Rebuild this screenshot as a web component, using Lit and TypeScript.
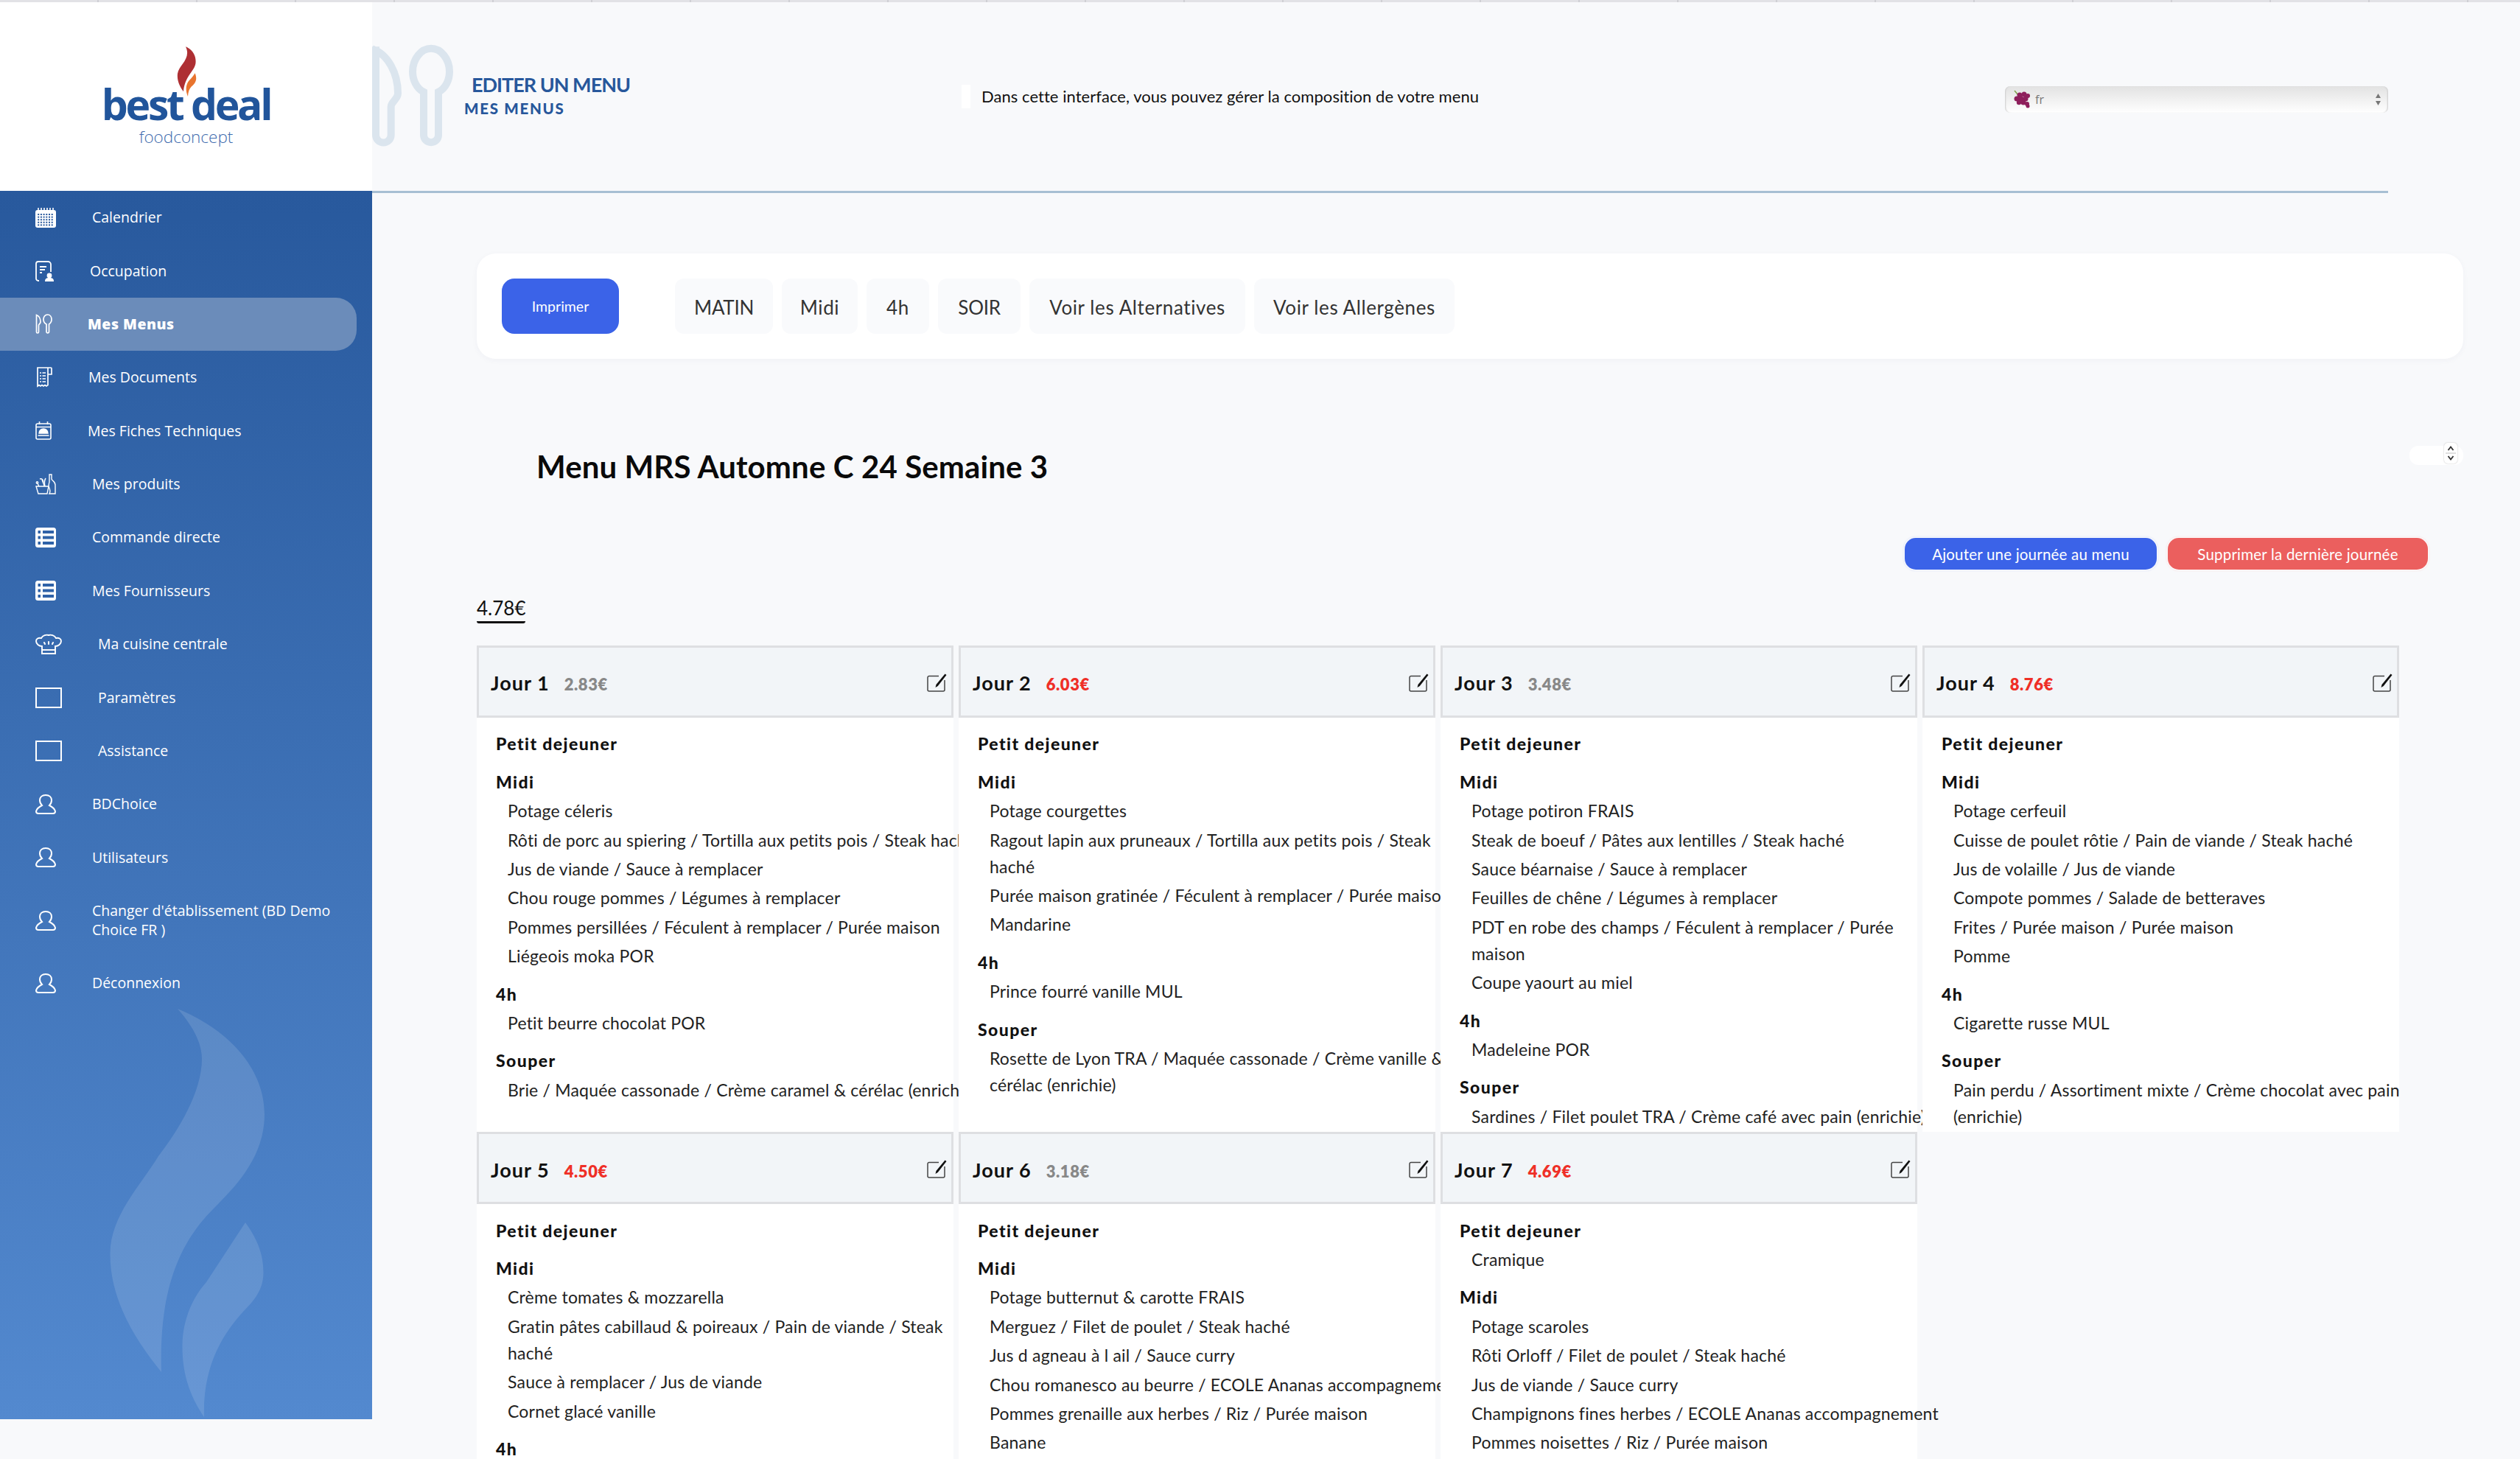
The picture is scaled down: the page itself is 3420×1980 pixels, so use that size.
import { LitElement, html, css, svg } from "lit";
import { customElement } from "lit/decorators.js";

type Section = { name: string; items: string[] };
type Day = { n: number; price: string; high: boolean; sections: Section[] };

const DAYS: Day[] = [
  { n: 1, price: "2.83€", high: false, sections: [
    { name: "Petit dejeuner", items: [] },
    { name: "Midi", items: ["Potage céleris", "Rôti de porc au spiering / Tortilla aux petits pois / Steak haché", "Jus de viande / Sauce à remplacer", "Chou rouge pommes / Légumes à remplacer", "Pommes persillées / Féculent à remplacer / Purée maison", "Liégeois moka POR"] },
    { name: "4h", items: ["Petit beurre chocolat POR"] },
    { name: "Souper", items: ["Brie / Maquée cassonade / Crème caramel & cérélac (enrichie)"] },
  ]},
  { n: 2, price: "6.03€", high: true, sections: [
    { name: "Petit dejeuner", items: [] },
    { name: "Midi", items: ["Potage courgettes", "Ragout lapin aux pruneaux / Tortilla aux petits pois / Steak\nhaché", "Purée maison gratinée / Féculent à remplacer / Purée maison", "Mandarine"] },
    { name: "4h", items: ["Prince fourré vanille MUL"] },
    { name: "Souper", items: ["Rosette de Lyon TRA / Maquée cassonade / Crème vanille &\ncérélac (enrichie)"] },
  ]},
  { n: 3, price: "3.48€", high: false, sections: [
    { name: "Petit dejeuner", items: [] },
    { name: "Midi", items: ["Potage potiron FRAIS", "Steak de boeuf / Pâtes aux lentilles / Steak haché", "Sauce béarnaise / Sauce à remplacer", "Feuilles de chêne / Légumes à remplacer", "PDT en robe des champs / Féculent à remplacer / Purée\nmaison", "Coupe yaourt au miel"] },
    { name: "4h", items: ["Madeleine POR"] },
    { name: "Souper", items: ["Sardines / Filet poulet TRA / Crème café avec pain (enrichie)"] },
  ]},
  { n: 4, price: "8.76€", high: true, sections: [
    { name: "Petit dejeuner", items: [] },
    { name: "Midi", items: ["Potage cerfeuil", "Cuisse de poulet rôtie / Pain de viande / Steak haché", "Jus de volaille / Jus de viande", "Compote pommes / Salade de betteraves", "Frites / Purée maison / Purée maison", "Pomme"] },
    { name: "4h", items: ["Cigarette russe MUL"] },
    { name: "Souper", items: ["Pain perdu / Assortiment mixte / Crème chocolat avec pain\n(enrichie)"] },
  ]},
  { n: 5, price: "4.50€", high: true, sections: [
    { name: "Petit dejeuner", items: [] },
    { name: "Midi", items: ["Crème tomates & mozzarella", "Gratin pâtes cabillaud & poireaux / Pain de viande / Steak\nhaché", "Sauce à remplacer / Jus de viande", "Cornet glacé vanille"] },
    { name: "4h", items: [] },
  ]},
  { n: 6, price: "3.18€", high: false, sections: [
    { name: "Petit dejeuner", items: [] },
    { name: "Midi", items: ["Potage butternut & carotte FRAIS", "Merguez / Filet de poulet / Steak haché", "Jus d agneau à l ail / Sauce curry", "Chou romanesco au beurre / ECOLE Ananas accompagnement", "Pommes grenaille aux herbes / Riz / Purée maison", "Banane"] },
  ]},
  { n: 7, price: "4.69€", high: true, sections: [
    { name: "Petit dejeuner", items: ["Cramique"] },
    { name: "Midi", items: ["Potage scaroles", "Rôti Orloff / Filet de poulet / Steak haché", "Jus de viande / Sauce curry", "Champignons fines herbes / ECOLE Ananas accompagnement", "Pommes noisettes / Riz / Purée maison"] },
  ]},
];

const TABS: [string, number][] = [["MATIN", 133], ["Midi", 103], ["4h", 85], ["SOIR", 112], ["Voir les Alternatives", 293], ["Voir les Allergènes", 272]];

const holes = () => {
  const out = [];
  for (let r = 0; r < 5; r++) for (let c = 0; c < 6; c++)
    out.push(svg`<rect x=${3.2 + c * 3.7} y=${8 + r * 3.6} width="2" height="2" fill="#28599d"/>`);
  return out;
};

const ICONS: Record<string, unknown> = {
  calendar: html`<svg width="28" height="27" viewBox="0 0 28 27"><rect y="3" width="28" height="24" rx="3" fill="#fff"/><path d="M4 0v5M8 0v5M12 0v5M16 0v5M20 0v5M24 0v5" stroke="#fff" stroke-width="1.6"/>${holes()}</svg>`,
  occupation: html`<svg width="25" height="28" viewBox="0 0 25 28" fill="none" stroke="#fff" stroke-width="1.8"><path d="M5 27H4a3 3 0 0 1-3-3V4a3 3 0 0 1 3-3h13a4 4 0 0 1 4 4v10"/><path d="M6 8h9M6 12h7M6 16h3"/><circle cx="19" cy="20" r="3.4" fill="#fff" stroke="none"/><path d="M13 28c0-4 2-5 6-5s6 1 6 5z" fill="#fff" stroke="none"/></svg>`,
  menus: html`<svg width="23" height="27" viewBox="0 0 23 27" fill="none" stroke="#fff" stroke-width="1.7"><path d="M1.5 1.5C5.5 3 7 7 7 11c0 2-2.5 3-2.5 4.5v9a1.5 1.5 0 0 1-3 0z"/><path d="M15 14c-2-1-4-3-4-6.5C11 4 13 1 16.5 1S22 4 22 7.500C22 11 20 13 18.500 14v10.500a1.800 1.800 0 0 1-3.500 0z"/></svg>`,
  docs: html`<svg width="23" height="28" viewBox="0 0 23 28" fill="none" stroke="#fff" stroke-width="1.7"><path d="M17 1H3v25l2-1.500 2 1.500 2-1.500 2 1.500 2-1.500 2 1.500 2-1.500V1zM17 1h4a1 1 0 0 1 1 1v8h-5"/><path d="M6 8h8M6 12h8M6 16h8M6 20h8" stroke-dasharray="2 1.500 6 0"/></svg>`,
  fiches: html`<svg width="22" height="25" viewBox="0 0 22 25" fill="none" stroke="#fff" stroke-width="1.600"><rect x="1" y="3" width="20" height="21" rx="2"/><path d="M1 7.500h20M5.500 0v4M16.500 0v4"/><path d="M5 16c0-4 3-6 6-6s6 2 6 6zM3.500 19h15" fill="#fff" stroke-width="1.400"/></svg>`,
  produits: html`<svg width="28" height="28" viewBox="0 0 28 28" fill="none" stroke="#fff" stroke-width="1.400"><path d="M1 17h17l-2 10H4zM3 13l2 4M9 7c0 4 3 6 3 10M6 7c3-1 5 1 5 5M14 6c-2 3-2 6-1 11"/><path d="M19 1h3v6c0 2 5 3 5 8v12h-8c2-3 1-6-1-10 0-4 1-5 1-6z"/><circle cx="2.500" cy="12" r="1.200"/></svg>`,
  table: html`<svg width="28" height="27" viewBox="0 0 28 27"><rect width="28" height="27" rx="3.500" fill="#fff"/><g fill="#2f62a8"><rect x="3.500" y="4" width="3.500" height="4"/><rect x="10" y="4" width="15" height="4"/><rect x="3.500" y="11.500" width="3.500" height="4"/><rect x="10" y="11.500" width="15" height="4"/><rect x="3.500" y="19" width="3.500" height="4"/><rect x="10" y="19" width="15" height="4"/></g></svg>`,
  chef: html`<svg width="36" height="28" viewBox="0 0 36 28" fill="none" stroke="#fff" stroke-width="1.900"><path d="M9 27H27V17C31 17 35 14 35 10C35 7 32 5 28 6C26 2 21 1 18 2C15 1 10 2 8 6C4 5 1 7 1 10C1 14 5 17 9 17Z"/><path d="M9 22H27"/><path d="M12 12l1 2M18 11v3M24 12l-1 2" stroke-linecap="round" stroke-width="2"/></svg>`,
  rect: html`<svg width="36" height="28" viewBox="0 0 36 28" fill="none"><rect x="1" y="1" width="34" height="26" stroke="#fff" stroke-width="2"/></svg>`,
  user: html`<svg width="28" height="27" viewBox="0 0 28 27" fill="none" stroke="#fff" stroke-width="2"><path d="M9 15c-2-2-3-4-3-7 0-4 3-7 8-7s8 3 8 7c0 3-1 5-3 7 4 2 7 4 8 8 0 2-1 3-3 3H4c-2 0-3-1-3-3 1-4 4-6 8-8z"/></svg>`,
};

const NAV = [
  ["calendar", "Calendrier"], ["occupation", "Occupation"], ["menus", "Mes Menus"], ["docs", "Mes Documents"],
  ["fiches", "Mes Fiches Techniques"], ["produits", "Mes produits"], ["table", "Commande directe"], ["table", "Mes Fournisseurs"],
  ["chef", "Ma cuisine centrale"], ["rect", "Paramètres"], ["rect", "Assistance"], ["user", "BDChoice"], ["user", "Utilisateurs"],
  ["user", "Changer d'établissement (BD Demo Choice FR )"], ["user", "Déconnexion"],
];

@customElement("app-root")
export class AppRoot extends LitElement {
  static styles = css`
    :host { display: block; height: 1980px; overflow: hidden; background: #f8f9fb; font-family: "Lato", "Open Sans", sans-serif; color: #222; --blue: #3b63e8; }
    .stripe { height: 3px; background: repeating-linear-gradient(90deg, #e2e2e6 0 132px, #cfcfd4 132px 134px); }
    .shell { display: grid; grid-template-columns: 505px 1fr; }
    aside { display: flex; flex-direction: column; }
    .logo { height: 256px; background: #fff; position: relative; display: flex; flex-direction: column; align-items: center; }
    .logo svg { position: absolute; left: 0; top: 0; }
    .wordmark { margin-top: 110px; font: 700 57px/56px "Open Sans", sans-serif; letter-spacing: -3.300px; color: #21559b; white-space: pre; }
    .sub { margin-top: 2px; font: 300 22.500px/30px "Open Sans", sans-serif; color: #3f6cae; }
    nav { position: relative; height: 1667px; background: linear-gradient(180deg, #28599d 0%, #5389cf 100%); font-family: "Open Sans", sans-serif; font-size: 19.500px; line-height: 26px; color: #fff; }
    nav > svg.wm { position: absolute; left: 0; top: 0; pointer-events: none; }
    .row { position: relative; display: flex; align-items: center; gap: 49px; padding: 0 21px 0 48px; margin-right: 21px; }
    .row span { padding: 23.200px 0; }
    .row svg { flex: none; display: block; }
    .row.active { background: #6b8cba; border-radius: 0 28px 28px 0; font-weight: 800; letter-spacing: .5px; gap: 48px; }
    main { min-width: 0; }
    header { margin-right: 179px; border-bottom: 3px solid #a7bfd3; display: flex; align-items: flex-start; padding-top: 55.300px; height: 200.700px; }
    .cutlery { width: 115px; height: 147px; flex: none; }
    .titles { margin-left: 10px; width: 675px; margin-top: 39.700px; flex: none; color: #27579b; font-weight: 700; white-space: nowrap; }
    .t1 { font-size: 27px; line-height: 33px; padding-left: 10px; letter-spacing: -1px; }
    .t2 { font-size: 20.500px; line-height: 33px; letter-spacing: 1.700px; font-weight: 900; }
    .info { width: 1416px; flex: none; display: flex; align-items: center; gap: 15px; margin-top: 56.700px; font-size: 22px; letter-spacing: .05px; color: #111; }
    .info i { width: 12px; height: 32px; background: #fff; display: block; }
    .select { flex: 1; height: 36px; margin-top: 58.700px; position: relative; border-radius: 7px; background: linear-gradient(180deg, #e2e2e2 0%, #fff 100%); box-shadow: inset 2px 0 2px -1px #ccc, inset -2px 0 2px -1px #ccc; display: flex; align-items: center; gap: 5px; padding-left: 11px; font: 16px "Open Sans", sans-serif; color: #777; }
    .select .arrows { position: absolute; right: 9px; top: 9px; }
    .content { margin: 82px 77px 0 142px; }
    .card { height: 143px; background: #fff; border-radius: 26px; box-shadow: 0 2px 8px rgba(40,60,90,.04); display: flex; align-items: center; padding-left: 34px; box-sizing: border-box; }
    .print { width: 159px; height: 75px; background: var(--blue); color: #fff; border-radius: 17px; display: flex; align-items: center; justify-content: center; font-size: 19.500px; margin-right: 76px; flex: none; }
    .tabs { display: flex; gap: 12px; }
    .tab { height: 75px; box-sizing: border-box; padding-top: 3px; background: #f9fafc; border-radius: 12px; display: flex; align-items: center; justify-content: center; font-size: 26px; letter-spacing: .6px; color: #333; white-space: nowrap; }
    .tab.caps { letter-spacing: -.3px; }
    .title-row { display: flex; justify-content: space-between; margin-top: 114.500px; height: 56.500px; }
    h1 { margin: 6.500px 0 0 81px; font-size: 42px; line-height: 50px; font-weight: 700; color: #0a0a0a; letter-spacing: .1px; }
    .num { position: relative; width: 73px; height: 26px; margin-top: 4px; background: #fff; border-radius: 12px; }
    .spin { position: absolute; right: 8px; top: -4px; width: 18px; height: 28px; background: #fff; border-radius: 5px; box-shadow: 0 0 2px #bbb; }
    .actions { display: flex; justify-content: flex-end; gap: 15px; margin: 72.500px 48px 0 0; }
    .btn { height: 42.500px; box-sizing: border-box; border-radius: 15px; color: #fff; display: flex; align-items: center; justify-content: center; font-size: 20.500px; letter-spacing: .2px; box-shadow: 0 0 0 1.500px rgba(255,255,255,.7), 0 0 2px 2px rgba(59,99,232,.12); }
    .btn.add { width: 342px; background: var(--blue); }
    .btn.del { width: 353px; background: #eb5f5e; box-shadow: 0 0 0 1.500px rgba(255,255,255,.7), 0 0 2px 2px rgba(235,95,94,.12); }
    .total { display: inline-block; margin-top: 34.500px; font-size: 26px; line-height: 36px; border-bottom: 3px solid #111; border-radius: 3px; color: #111; vertical-align: top; }
    .total-wrap { height: 39px; }
    .grid { display: grid; grid-template-columns: repeat(4, 654px); margin-top: 64px; width: 2700px; }
    .day { margin-right: 7px; background: #fff; isolation: isolate; min-width: 0; }
    .head { height: 98px; box-sizing: border-box; border: 3px solid #dedfe2; background: #f2f5f8; padding: 4px 6px 0 16px; display: flex; align-items: center; }
    .jour { font-size: 27px; font-weight: 700; color: #111; letter-spacing: 1px; }
    .price { margin-left: 20px; font-size: 22px; font-weight: 800; margin-top: 4px; color: #888; letter-spacing: .6px; }
    .price.high { color: #ef2f27; }
    .edit { margin-left: auto; margin-top: -1px; display: block; }
    .body { padding: 17.500px 0 0 26px; font-size: 23px; letter-spacing: .2px; color: #222; }
    .sec { display: flow-root; margin-bottom: 12px; }
    .sec:last-child { margin-bottom: 0; }
    .sec h3 { margin: 0 0 3.400px; font-size: 23px; line-height: 36px; font-weight: 900; color: #111; letter-spacing: 1.400px; }
    .it { margin: 0 0 3.400px 16px; line-height: 36px; white-space: pre; }
  `;

  private renderDay(d: Day) {
    return html`<section class="day">
      <div class="head">
        <span class="jour">Jour ${d.n}</span>
        <span class="price ${d.high ? "high" : ""}">${d.price}</span>
        <svg class="edit" width="27" height="25" viewBox="0 0 27 25" fill="none"><path d="M16 3.500H3a2 2 0 0 0-2 2V22a2 2 0 0 0 2 2h19a2 2 0 0 0 2-2V9" stroke="#444" stroke-width="1.500"/><path d="M24.500 .5L12.500 15l-1 4 3.300-2L26.500 2z" fill="#111"/></svg>
      </div>
      <div class="body">
        ${d.sections.map((s) => html`<div class="sec"><h3>${s.name}</h3>${s.items.map((i) => html`<div class="it">${i}</div>`)}</div>`)}
      </div>
    </section>`;
  }

  render() {
    return html`
      <div class="stripe"></div>
      <div class="shell">
        <aside>
          <div class="logo">
            <svg width="505" height="256" viewBox="-300 -81 1515 768"><path d="M456 100C490 115 500 145 496 170C490 200 450 225 447 283C430 260 420 235 423 210C428 175 480 150 456 100Z" fill="#ae2f33"/><path d="M494 208C505 235 495 250 480 262C470 272 466 285 465 303C455 280 455 255 470 238C480 228 488 218 494 208Z" fill="#e8742f"/></svg>
            <div class="wordmark">best deal</div>
            <div class="sub">foodconcept</div>
          </div>
          <nav>
            <svg class="wm" width="505" height="1665" viewBox="0 259 505 1665"><g fill="#fff" fill-opacity=".12"><path d="M241 1369C310 1397 359 1450 359 1512C359 1570 320 1610 290 1640C250 1680 215 1740 219 1862C185 1820 149 1765 149.500 1701C150 1650 190 1610 215 1569C245 1530 274 1480 274 1437C274 1410 255 1385 241 1369Z"/><path d="M333 1659C348 1680 357.500 1700 357.500 1727C357.500 1750 345 1765 330 1780C305 1808 275 1850 277 1923C258 1895 247 1865 247.500 1825C248 1790 262 1760 280 1740Z"/></g></svg>
            ${NAV.map(([icon, label]) => html`<div class="row ${label === "Mes Menus" ? "active" : ""}">${ICONS[icon]}<span>${label}</span></div>`)}
          </nav>
        </aside>
        <main>
          <header>
            <svg class="cutlery" viewBox="15 55 345 440" fill="none" stroke="#dbe5ee" stroke-width="30"><path d="M15 80C80 100 120 180 120 260C120 285 92 295 92 315V430A31 31 0 0 1 30 430V70"/><path d="M225 255C195 240 180 205 180 172C180 120 215 78 255 78C295 78 330 120 330 172C330 205 315 240 285 255V430A30 30 0 0 1 225 430Z"/></svg>
            <div class="titles"><div class="t1">EDITER UN MENU</div><div class="t2">MES MENUS</div></div>
            <div class="info"><i></i><span>Dans cette interface, vous pouvez gérer la composition de votre menu</span></div>
            <div class="select">
              <svg width="25" height="25" viewBox="0 0 25 25"><path d="M2 1l5 6" stroke="#7da24a" stroke-width="1.500"/><g fill="#8e1f5c"><circle cx="9" cy="7" r="3.500"/><circle cx="15" cy="6" r="3.500"/><circle cx="20" cy="8" r="3"/><circle cx="5" cy="12" r="3.500"/><circle cx="11" cy="12" r="3.500"/><circle cx="17" cy="12" r="3.500"/><circle cx="8" cy="17" r="3.200"/><circle cx="14" cy="17" r="3.500"/><circle cx="19" cy="19" r="3"/><circle cx="20" cy="22" r="2.500"/></g></svg>
              <span>fr</span>
              <svg class="arrows" width="9" height="18" viewBox="0 0 9 18"><path d="M4.500 1L8 7H1zM4.500 17L1 11h7z" fill="#777"/></svg>
            </div>
          </header>
          <div class="content">
            <div class="card">
              <div class="print">Imprimer</div>
              <div class="tabs">${TABS.map(([t, w]) => html`<div class="tab ${t === t.toUpperCase() ? "caps" : ""}" style="width:${w}px">${t}</div>`)}</div>
            </div>
            <div class="title-row">
              <h1>Menu MRS Automne C 24 Semaine 3</h1>
              <div class="num"><div class="spin"><svg width="18" height="28" viewBox="0 0 18 28" fill="none" stroke="#333" stroke-width="1.800"><path d="M5.500 10L9 5.500 12.500 10M5.500 18L9 22.500 12.500 18"/><path d="M2 14h14" stroke="#ddd"/></svg></div></div>
            </div>
            <div class="actions"><div class="btn add">Ajouter une journée au menu</div><div class="btn del">Supprimer la dernière journée</div></div>
            <div class="total-wrap"><span class="total">4.78€</span></div>
            <div class="grid">${DAYS.map((d) => this.renderDay(d))}</div>
          </div>
        </main>
      </div>
    `;
  }
}
